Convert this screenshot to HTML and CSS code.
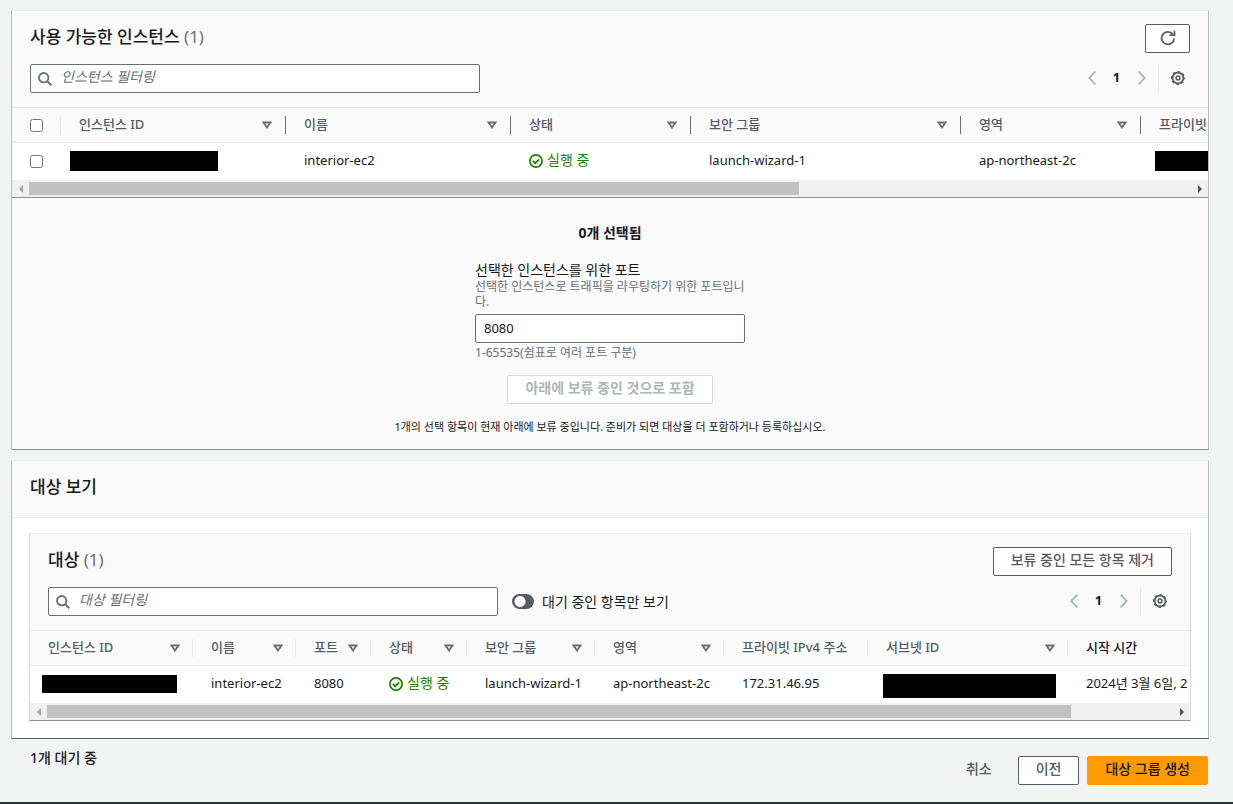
FILE: index.html
```html
<!DOCTYPE html>
<html lang="ko">
<head>
<meta charset="utf-8">
<meta name="viewport" content="width=device-width, initial-scale=1">
<title>대상 그룹 생성</title>
<link rel="stylesheet" href="styles.css">
</head>
<body>
<svg class="defs" aria-hidden="true">
  <symbol id="search" viewBox="0 0 14 14"><circle cx="5.7" cy="5.7" r="4.700" fill="none" stroke="currentColor" stroke-width="1.9"/><path d="M9 9l4.300 4.300" stroke="currentColor" stroke-width="2" fill="none"/></symbol>
  <symbol id="refresh" viewBox="0 0 16 16"><path d="M14.200 8.500A6.300 6.300 0 1 1 12.800 4.100" fill="none" stroke="currentColor" stroke-width="1.8"/><path d="M14.500.8V5.200H9.500" fill="none" stroke="currentColor" stroke-width="1.8"/></symbol>
  <symbol id="gear" viewBox="0 0 14 14"><circle cx="7" cy="7" r="5.400" fill="none" stroke="currentColor" stroke-width="1.700"/><circle cx="7" cy="7" r="6.400" fill="none" stroke="currentColor" stroke-width="1.200" stroke-dasharray="2.800 2.230" stroke-dashoffset="1.400"/><circle cx="7" cy="7" r="1.900" fill="none" stroke="currentColor" stroke-width="1.500"/></symbol>
  <symbol id="sort" viewBox="0 0 10 8"><path d="M1.500 1.500h7L5 6.500z" fill="none" stroke="currentColor" stroke-width="1.800"/></symbol>
  <symbol id="prev" viewBox="0 0 8 14"><path d="M7.300.7L1.200 7l6.100 6.300" fill="none" stroke="currentColor" stroke-width="1.800"/></symbol>
  <symbol id="next" viewBox="0 0 8 14"><path d="M.7.7L6.800 7 .7 13.300" fill="none" stroke="currentColor" stroke-width="1.800"/></symbol>
  <symbol id="ok" viewBox="0 0 14 14"><circle cx="7" cy="7" r="6.100" fill="none" stroke="currentColor" stroke-width="1.700"/><path d="M3.900 7l2.300 2.200 4-3.900" fill="none" stroke="currentColor" stroke-width="1.800"/></symbol>
</svg>

<main class="page">
  <section class="panel">
    <header class="panel-head">
      <div class="bar">
        <h2>사용 가능한 인스턴스 <span class="count">(1)</span></h2>
        <button class="btn btn-icon" type="button" aria-label="새로 고침"><svg class="i16"><use href="#refresh"/></svg></button>
      </div>
      <div class="bar">
        <label class="search"><svg class="i14"><use href="#search"/></svg><input type="text" placeholder="인스턴스 필터링" aria-label="인스턴스 필터링"></label>
        <nav class="pager" aria-label="페이지">
          <button type="button" aria-label="이전 페이지"><svg class="arrow"><use href="#prev"/></svg></button>
          <button type="button" class="current">1</button>
          <button type="button" aria-label="다음 페이지"><svg class="arrow"><use href="#next"/></svg></button>
          <button type="button" class="settings" aria-label="기본 설정"><svg class="i14"><use href="#gear"/></svg></button>
        </nav>
      </div>
    </header>
    <div class="table-wrap">
      <table class="available">
        <colgroup><col class="w48"><col class="w225"><col class="w225"><col class="w180"><col class="w270"><col class="w180"><col></colgroup>
        <thead>
          <tr>
            <th class="pick"><div class="th light"><input type="checkbox" aria-label="모두 선택"></div></th>
            <th><div class="th">인스턴스 ID<svg class="sort"><use href="#sort"/></svg></div></th>
            <th><div class="th">이름<svg class="sort"><use href="#sort"/></svg></div></th>
            <th><div class="th">상태<svg class="sort"><use href="#sort"/></svg></div></th>
            <th><div class="th">보안 그룹<svg class="sort"><use href="#sort"/></svg></div></th>
            <th><div class="th">영역<svg class="sort"><use href="#sort"/></svg></div></th>
            <th><div class="th">프라이빗 IPv4 주소</div></th>
          </tr>
        </thead>
        <tbody>
          <tr>
            <td class="pick"><input type="checkbox" aria-label="interior-ec2 선택"></td>
            <td class="hidden-value"><div class="mask mask-a"></div></td>
            <td>interior-ec2</td>
            <td><span class="status"><svg class="i14"><use href="#ok"/></svg>실행 중</span></td>
            <td>launch-wizard-1</td>
            <td>ap-northeast-2c</td>
            <td class="hidden-value ip"><div class="mask mask-b"></div></td>
          </tr>
        </tbody>
      </table>
    </div>
    <div class="scroll"><span class="left"></span><div class="track"><div class="thumb" style="width:66.3%"></div></div><span class="right"></span></div>
    <div class="port">
      <p class="selected">0개 선택됨</p>
      <div class="field">
        <label for="port">선택한 인스턴스를 위한 포트</label>
        <p class="hint">선택한 인스턴스로 트래픽을 라우팅하기 위한 포트입니다.</p>
        <input id="port" type="text" value="8080">
        <p class="hint">1-65535(쉼표로 여러 포트 구분)</p>
      </div>
      <button class="btn" type="button" disabled>아래에 보류 중인 것으로 포함</button>
      <p class="note">1개의 선택 항목이 현재 아래에 보류 중입니다. 준비가 되면 대상을 더 포함하거나 등록하십시오.</p>
    </div>
  </section>

  <section class="panel review">
    <header class="review-head"><h2>대상 보기</h2></header>
    <div class="review-body">
      <section class="panel inner">
        <header class="panel-head">
          <div class="bar">
            <h2>대상 <span class="count">(1)</span></h2>
            <button class="btn" type="button">보류 중인 모든 항목 제거</button>
          </div>
          <div class="bar">
            <div class="filters">
              <label class="search"><svg class="i14"><use href="#search"/></svg><input type="text" placeholder="대상 필터링" aria-label="대상 필터링"></label>
              <label class="toggle"><input type="checkbox" role="switch">대기 중인 항목만 보기</label>
            </div>
            <nav class="pager" aria-label="페이지">
              <button type="button" aria-label="이전 페이지"><svg class="arrow"><use href="#prev"/></svg></button>
              <button type="button" class="current">1</button>
              <button type="button" aria-label="다음 페이지"><svg class="arrow"><use href="#next"/></svg></button>
              <button type="button" class="settings" aria-label="기본 설정"><svg class="i14"><use href="#gear"/></svg></button>
            </nav>
          </div>
        </header>
        <div class="table-wrap">
          <table class="targets">
            <colgroup><col class="w163"><col class="w103"><col class="w75"><col class="w97"><col class="w127"><col class="w129"><col class="w144"><col class="w200"><col></colgroup>
            <thead>
              <tr>
                <th><div class="th light">인스턴스 ID<svg class="sort"><use href="#sort"/></svg></div></th>
                <th><div class="th light">이름<svg class="sort"><use href="#sort"/></svg></div></th>
                <th><div class="th light">포트<svg class="sort"><use href="#sort"/></svg></div></th>
                <th><div class="th light">상태<svg class="sort"><use href="#sort"/></svg></div></th>
                <th><div class="th light">보안 그룹<svg class="sort"><use href="#sort"/></svg></div></th>
                <th><div class="th light">영역<svg class="sort"><use href="#sort"/></svg></div></th>
                <th><div class="th light">프라이빗 IPv4 주소</div></th>
                <th><div class="th light">서브넷 ID<svg class="sort"><use href="#sort"/></svg></div></th>
                <th><div class="th light dark">시작 시간</div></th>
              </tr>
            </thead>
            <tbody>
              <tr>
                <td class="hidden-value"><div class="mask mask-c"></div></td>
                <td>interior-ec2</td>
                <td>8080</td>
                <td><span class="status"><svg class="i14"><use href="#ok"/></svg>실행 중</span></td>
                <td>launch-wizard-1</td>
                <td>ap-northeast-2c</td>
                <td>172.31.46.95</td>
                <td class="hidden-value subnet"><div class="mask mask-d"></div></td>
                <td>2024년 3월 6일, 2</td>
              </tr>
            </tbody>
          </table>
        </div>
        <div class="scroll"><span class="left"></span><div class="track"><div class="thumb" style="width:90.9%"></div></div><span class="right"></span></div>
      </section>
    </div>
  </section>

  <footer class="actions">
    <p class="pending">1개 대기 중</p>
    <div class="buttons">
      <button class="btn btn-link" type="button">취소</button>
      <button class="btn" type="button">이전</button>
      <button class="btn btn-primary" type="button">대상 그룹 생성</button>
    </div>
  </footer>
</main>
<div class="page-end"></div>
</body>
</html>
```

FILE: styles.css
```css
* { box-sizing: border-box; }
body {
  margin: 0;
  min-height: 100vh;
  display: flex;
  flex-direction: column;
  background: #f2f3f3;
  color: #16191f;
  font: 13px/18px "Noto Sans", "Noto Sans CJK KR", sans-serif;
}
h2, p { margin: 0; }
button, input { font: inherit; color: inherit; }
svg { flex: none; display: block; }
.defs { position: absolute; width: 0; height: 0; }
.i14 { width: 14px; height: 14px; }
.i16 { width: 16px; height: 16px; }
.page { flex: 1; padding: 10px 24px 0 11px; }
.page-end { height: 2px; background: #232f3e; }

.panel {
  background: #fafafa;
  border: 1px solid #b6bebe;
  border-top-color: #eaeded;
  border-bottom-color: #879596;
}
.panel-head {
  display: flex;
  flex-direction: column;
  gap: 11px;
  padding: 13px 18px 14px;
  border-bottom: 1px solid #eaeded;
}
.bar { display: flex; justify-content: space-between; align-items: center; height: 29px; }
h2 { font-size: 17px; line-height: 22px; font-weight: 500; padding-bottom: 3px; }
.count { color: #687078; font-weight: 400; }

.btn {
  height: 29px;
  padding: 0 17px 3px;
  border: 1px solid #545b64;
  border-radius: 2px;
  background: #fff;
  color: #545b64;
  font-size: 14px;
  font-weight: 500;
  white-space: nowrap;
}
.btn:disabled { border-color: #d5dbdb; color: #aab7b8; font-weight: 700; }
.btn-icon { width: 45px; padding: 0 0 2px; display: grid; place-items: center; }
.btn-link { border-color: transparent; background: none; }
.btn-primary { background: #ff9900; border-color: #ff9900; color: #16191f; }

.search {
  display: flex;
  align-items: center;
  gap: 9px;
  width: 450px;
  height: 29px;
  padding: 0 7px;
  background: #fff;
  border: 1px solid #687078;
  border-radius: 2px;
  color: #687078;
}
.search input { flex: 1; min-width: 0; padding: 0 0 3px; border: 0; outline: 0; background: none; font-size: 14px; }
.search input::placeholder { color: #687078; font-style: italic; opacity: 1; }
.filters { display: flex; align-items: center; gap: 14px; }
.toggle { display: flex; align-items: center; gap: 8px; font-size: 14px; white-space: nowrap; }
.toggle input {
  appearance: none;
  width: 22px;
  height: 15px;
  margin: 0;
  border-radius: 8px;
  background: radial-gradient(circle at 8px 50%, #fff 5px, #545b64 6px);
}

.pager { display: flex; align-items: center; height: 29px; }
.pager button {
  display: grid;
  place-items: center;
  width: 25px;
  height: 29px;
  padding: 0 0 2px;
  border: 0;
  background: none;
  color: #aab7b8;
}
.pager .current { color: #16191f; font-weight: 700; padding-bottom: 4px; }
.pager .settings { width: 32px; margin-left: 4px; padding: 0 0 2px 6px; border-left: 1px solid #eaeded; color: #545b64; }
.arrow { width: 8px; height: 14px; }

.table-wrap { overflow: hidden; background: #fff; }
table { table-layout: fixed; border-collapse: separate; border-spacing: 0; }
.available { width: 1804px; }
.targets { width: 1276px; }
.w48 { width: 49px; }
.w75 { width: 75px; }
.w97 { width: 96px; }
.w103 { width: 103px; }
.w127 { width: 128px; }
.w129 { width: 129px; }
.w144 { width: 144px; }
.w163 { width: 163px; }
.w180 { width: 180px; }
.w200 { width: 200px; }
.w225 { width: 225px; }
.w270 { width: 270px; }
th { height: 35px; padding: 0; background: #fafafa; border-bottom: 1px solid #eaeded; text-align: left; }
.th {
  display: flex;
  align-items: center;
  justify-content: space-between;
  height: 18px;
  padding: 0 13px 2px 18px;
  border-right: 1px solid #687078;
  color: #545b64;
  font-weight: 500;
  white-space: nowrap;
}
.th.light { border-right-color: #eaeded; padding-right: 12px; }
.th.dark { color: #16191f; }
.sort { width: 10px; height: 8px; margin-top: 2px; color: #687078; }
td { height: 37px; padding: 0 0 4px 18px; white-space: nowrap; }
.pick input { display: block; width: 13px; height: 13px; margin: 0; }
.pick .th { padding-bottom: 0; }
td.pick { padding-bottom: 0; }
.status { display: flex; align-items: center; gap: 4px; color: #1d8102; font-size: 14px; }
.status svg { margin-top: 3px; }
td.hidden-value { padding: 0 0 2px 9px; }
.available td.ip { padding-left: 14px; }
.targets .hidden-value { padding-left: 12px; }
.targets .subnet { padding: 3px 0 0 15px; }
.mask { height: 20px; background: #000; }
.mask-a { width: 148px; }
.mask-b { width: 110px; }
.mask-c { width: 135px; height: 18px; }
.mask-d { width: 173px; height: 24px; }

.scroll { display: flex; align-items: center; height: 17px; background: #f0f0f0; }
.track { flex: 1; }
.thumb { height: 13px; background: #c1c1c1; }
.left, .right { width: 17px; height: 8px; }
.left::before, .right::before { content: ""; display: block; width: 0; margin: 0 auto; border: 4px solid transparent; }
.left::before { border-right-color: #a3a3a3; border-left-width: 0; }
.right::before { border-left-color: #505050; border-right-width: 0; }

.port {
  display: flex;
  flex-direction: column;
  align-items: center;
  padding: 26px 18px 13px;
  border-top: 1px solid #879596;
}
.selected, .pending { font-size: 14px; font-weight: 500; }
.selected { font-weight: 700; }
.field { display: flex; flex-direction: column; width: 270px; margin: 19px 0 15px; }
.field label { font-size: 14px; }
.hint { color: #687078; font-size: 12px; line-height: 15px; }
.field input {
  height: 29px;
  margin: 5px 0 2px;
  padding: 0 8px 2px;
  border: 1px solid #687078;
  border-radius: 2px;
  background: #fff;
}
.note { margin-top: 14px; font-size: 11px; }

.review { margin-top: 10px; border-bottom-color: #545b64; }
.review-head { padding: 15px 18px 16px; border-bottom: 1px solid #eaeded; }
.review-body { padding: 15px 17px 17px; background: #fff; }
.inner { border-color: #eaeded #d5dbdb #879596; }

.actions { display: flex; justify-content: space-between; align-items: flex-start; padding: 10px 1px 0 19px; }
.buttons { display: flex; gap: 8px; padding-top: 7px; }
```
